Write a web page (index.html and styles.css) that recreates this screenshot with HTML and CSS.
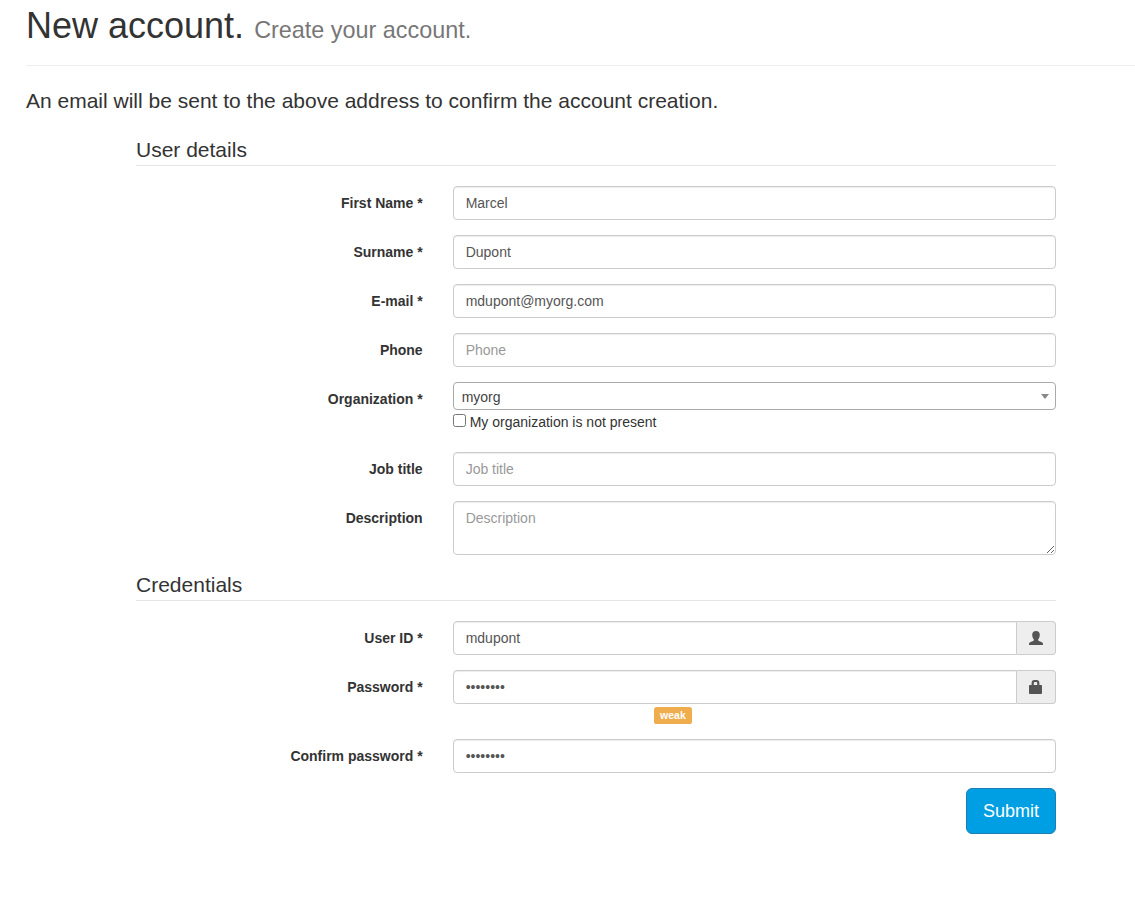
FILE: index.html
```html
<!DOCTYPE html>
<html lang="en">
<head>
	<meta charset="UTF-8">
	<title>New account</title>
	<link rel="stylesheet" href="styles.css">
</head>
<body>
	<div class="container">
		<div class="page-header">
			<h1>New account. <small>Create your account.</small></h1>
		</div>
		<p class="lead">An email will be sent to the above address to confirm the account creation.</p>
		<form class="account-form" action="#" method="post">
			<h2 class="legend">User details</h2>
			<div class="form-group">
				<label class="control-label" for="firstName">First Name *</label>
				<input type="text" id="firstName" class="form-control" value="Marcel">
			</div>
			<div class="form-group">
				<label class="control-label" for="surname">Surname *</label>
				<input type="text" id="surname" class="form-control" value="Dupont">
			</div>
			<div class="form-group">
				<label class="control-label" for="email">E-mail *</label>
				<input type="text" id="email" class="form-control" value="mdupont@myorg.com">
			</div>
			<div class="form-group">
				<label class="control-label" for="phone">Phone</label>
				<input type="text" id="phone" class="form-control" placeholder="Phone">
			</div>
			<div class="form-group">
				<label class="control-label">Organization *</label>
				<div class="org">
					<div class="org-select" tabindex="0">
						<span>myorg</span>
						<span class="arrow"></span>
					</div>
					<div class="org-check">
						<input type="checkbox" id="noOrg">
						<label for="noOrg">My organization is not present</label>
					</div>
				</div>
			</div>
			<div class="form-group">
				<label class="control-label" for="title">Job title</label>
				<input type="text" id="title" class="form-control" placeholder="Job title">
			</div>
			<div class="form-group">
				<label class="control-label" for="description">Description</label>
				<textarea id="description" class="form-control" rows="2" placeholder="Description"></textarea>
			</div>

			<h2 class="legend">Credentials</h2>
			<div class="form-group">
				<label class="control-label" for="uid">User ID *</label>
				<div class="input-group">
					<input type="text" id="uid" class="form-control" value="mdupont">
					<span class="addon">
						<svg width="14" height="14" viewBox="0 0 14 14"><path d="M7 0C9.500 0 10.800 1.500 10.800 3.700C10.800 5.600 10.200 7.200 9.200 8.200V9C9.200 9.700 9.700 9.900 10.500 10.200L13 11.300C13.700 11.700 14 12.200 14 13V14H0V13C0 12.200.3 11.700 1 11.300L3.500 10.200C4.300 9.900 4.800 9.700 4.800 9V8.200C3.800 7.200 3.200 5.600 3.200 3.700C3.200 1.500 4.500 0 7 0Z"/></svg>
					</span>
				</div>
			</div>
			<div class="form-group">
				<label class="control-label" for="password">Password *</label>
				<div>
					<div class="input-group">
						<input type="password" id="password" class="form-control" value="password">
						<span class="addon">
							<svg width="14" height="14" viewBox="0 0 14 14"><path fill-rule="evenodd" d="M2.600 5V3C2.600 1 3.600 0 5.300 0H7.700C9.400 0 10.400 1 10.400 3V5H12.200Q13 5 13 5.800V13.200Q13 14 12.200 14H.8Q0 14 0 13.200V5.800Q0 5 .8 5ZM4.800 5H8.200V3C8.200 2.300 7.900 2 7.300 2H5.700C5.100 2 4.800 2.300 4.800 3Z"/></svg>
						</span>
					</div>
					<div class="strength"><span class="badge">weak</span></div>
				</div>
			</div>
			<div class="form-group">
				<label class="control-label" for="confirm">Confirm password *</label>
				<input type="password" id="confirm" class="form-control" value="password">
			</div>
			<div class="actions">
				<button type="submit" class="btn">Submit</button>
			</div>
		</form>
	</div>
</body>
</html>
```
FILE: styles.css
```css
*{
	box-sizing:border-box;
}
body{
	margin:0;
	font-family:"Liberation Sans",Arial,sans-serif;
	font-size:14px;
	line-height:20px;
	color:#333;
	background-color:#fff;
}
input,textarea,button{
	font-family:inherit;
	font-size:inherit;
	line-height:inherit;
}
.container{
	padding:6px 0 0 26px;
}
.page-header{
	padding-bottom:19px;
	margin-bottom:20px;
	border-bottom:1px solid #eee;
}
h1{
	margin:0;
	font-size:36px;
	font-weight:500;
	line-height:40px;
}
h1 small{
	font-size:65%;
	font-weight:400;
	line-height:1;
	color:#777;
}
.lead{
	margin:0 0 20px;
	font-size:21px;
	font-weight:300;
	line-height:29.4px;
}
.account-form{
	width:920px;
	margin-left:110px;
}
.legend{
	margin:0 0 20px;
	font-size:21px;
	font-weight:400;
	line-height:30px;
	border-bottom:1px solid #e5e5e5;
}
.form-group{
	display:grid;
	grid-template-columns:286.67px 1fr;
	column-gap:30px;
	align-items:start;
	margin-bottom:15px;
}
.control-label{
	padding-top:7px;
	font-weight:bold;
	text-align:right;
}
.form-control{
	display:block;
	width:100%;
	height:34px;
	padding:6px 12px;
	color:#555;
	background-color:#fff;
	border:1px solid #ccc;
	border-radius:4px;
	box-shadow:inset 0 1px 1px rgba(0,0,0,.075);
}
.form-control::placeholder{
	color:#999;
}
textarea.form-control{
	height:54px;
	resize:vertical;
}
.org{
	height:55px;
}
.org-select{
	display:flex;
	align-items:center;
	justify-content:space-between;
	height:28px;
	padding:1px 6px 0 8px;
	color:#444;
	border:1px solid #aaa;
	border-radius:4px;
}
.arrow{
	border-style:solid;
	border-width:5px 4px 0;
	border-color:#888 transparent transparent;
}
.org-check{
	display:flex;
	align-items:flex-start;
	padding-top:2px;
}
.org-check input{
	width:13px;
	height:13px;
	margin:2px 4px 0 0;
}
.input-group{
	display:flex;
}
.input-group .form-control{
	flex:1;
	min-width:0;
	border-radius:4px 0 0 4px;
}
.addon{
	display:flex;
	align-items:center;
	padding:0 12px;
	background-color:#eee;
	border:1px solid #ccc;
	border-left:0;
	border-radius:0 4px 4px 0;
}
.addon svg{
	display:block;
	fill:#555;
}
.strength{
	height:20px;
	padding-left:33.333%;
}
.badge{
	display:inline;
	padding:.2em .6em;
	font-size:10.5px;
	font-weight:bold;
	line-height:1;
	color:#fff;
	background-color:#f0ad4e;
	border-radius:.25em;
}
.actions{
	display:flex;
	justify-content:flex-end;
}
.btn{
	height:46px;
	padding:10px 16px;
	font-size:18px;
	line-height:24px;
	color:#fff;
	background-color:#009fe3;
	border:1px solid #1b7fb5;
	border-radius:6px;
	cursor:pointer;
}
```
